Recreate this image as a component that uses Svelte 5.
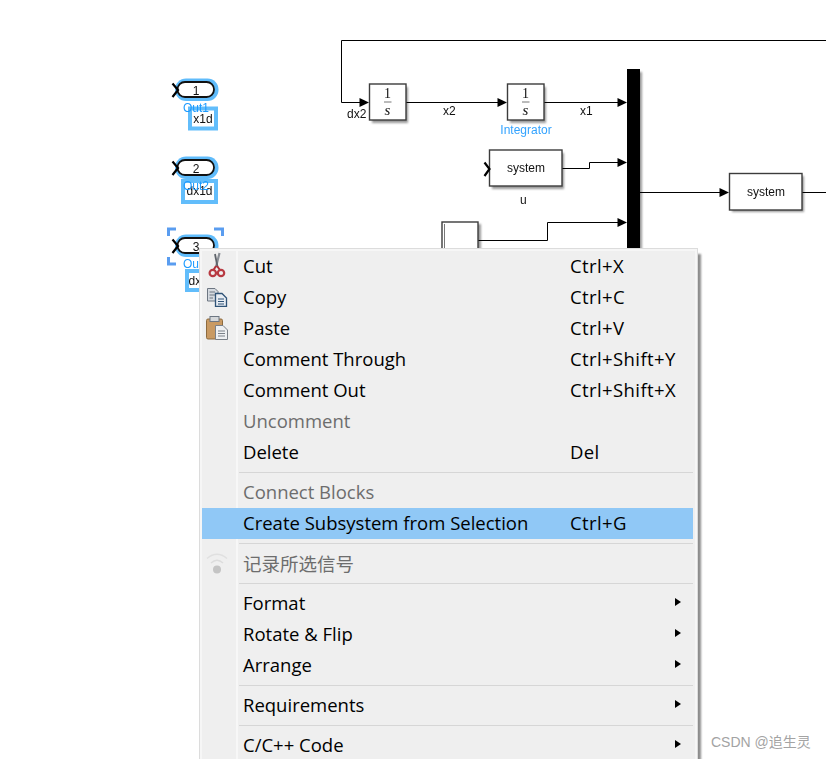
<script lang="ts">
  type Entry = { sep?: boolean; label?: string; key?: string; off?: boolean; hot?: boolean; sub?: boolean; icon?: string; cjk?: boolean };

  const menu: Entry[] = [
    { label: "Cut", key: "Ctrl+X", icon: "cut" },
    { label: "Copy", key: "Ctrl+C", icon: "copy" },
    { label: "Paste", key: "Ctrl+V", icon: "paste" },
    { label: "Comment Through", key: "Ctrl+Shift+Y" },
    { label: "Comment Out", key: "Ctrl+Shift+X" },
    { label: "Uncomment", off: true },
    { label: "Delete", key: "Del" },
    { sep: true },
    { label: "Connect Blocks", off: true },
    { label: "Create Subsystem from Selection", key: "Ctrl+G", hot: true },
    { sep: true },
    { label: "记录所选信号", off: true, icon: "signal", cjk: true },
    { sep: true },
    { label: "Format", sub: true },
    { label: "Rotate & Flip", sub: true },
    { label: "Arrange", sub: true },
    { sep: true },
    { label: "Requirements", sub: true },
    { sep: true },
    { label: "C/C++ Code", sub: true },
  ];

  const ports = [
    { n: "1", y: 82, out: "Out1", box: { x: 190, y: 108.5, w: 26, h: 20 }, text: "x1d" },
    { n: "2", y: 160, out: "Out2", box: { x: 183, y: 181, w: 33, h: 21 }, text: "dx1d" },
    { n: "3", y: 238, out: "Out3", box: { x: 187, y: 271, w: 29, h: 19 }, text: "dx2d" },
  ];

  const arrows = [
    [369, 102],
    [507, 102],
    [627, 102],
    [627, 162],
    [627, 222],
    [729, 192],
  ];
</script>

<div class="page">
  <svg class="diagram" width="826" height="759" viewBox="0 0 826 759">
    <defs>
      <filter id="soft" x="-20%" y="-20%" width="150%" height="150%">
        <feGaussianBlur stdDeviation="1.2" />
      </filter>
    </defs>

    <g class="wire">
      <path d="M826 40.5H341.5V102.5H362" />
      <path d="M406 102.5H500" />
      <path d="M544 102.5H619" />
      <path d="M562 168.5H589.5V162.5H619" />
      <path d="M478 240.5H547.5V222.5H619" />
      <path d="M640 192.5H721" />
      <path d="M802 192.5H826" />
    </g>
    {#each arrows as [x, y]}
      <path class="arrow" d="M{x} {y + 0.5}l-9.5 -4.5v9z" />
    {/each}

    <!-- block shadows -->
    <g class="shadow" filter="url(#soft)">
      <rect x="372" y="87" width="36" height="36" />
      <rect x="510" y="87" width="36" height="36" />
      <rect x="492" y="153" width="72" height="36" />
      <rect x="732" y="176" width="72" height="36" />
      <rect x="445" y="224" width="36" height="36" />
      <rect x="630" y="72" width="12" height="180" />
    </g>

    <rect class="block" x="369.5" y="84" width="36.5" height="36" />
    <rect class="block" x="507.5" y="84" width="36.5" height="36" />
    <rect class="block" x="489.5" y="150" width="72.5" height="36" />
    <rect class="block" x="729.5" y="173.5" width="72.5" height="36.5" />
    <rect class="block" x="442" y="222" width="36" height="36" />
    <path class="inner" d="M444.5 224V250" />
    <rect class="bar" x="627" y="69" width="13" height="190" />

    {#each [387.5, 525.5] as cx}
      <text class="math one" x={cx} y="97.5" text-anchor="middle">1</text>
      <path class="frac" d="M{cx - 3.5} 102H{cx + 4}" />
      <text class="math" x={cx} y="114.5" text-anchor="middle">s</text>
    {/each}

    <text class="lbl" x="347" y="118">dx2</text>
    <text class="lbl" x="443" y="115">x2</text>
    <text class="lbl" x="580" y="115">x1</text>
    <text class="lbl" x="520" y="204">u</text>
    <text class="lbl blue" x="526" y="134" text-anchor="middle">Integrator</text>
    <text class="lbl" x="526" y="172" text-anchor="middle">system</text>
    <text class="lbl" x="766" y="196" text-anchor="middle">system</text>
    <path class="chev" d="M484.5 162.5L489.5 169L484.5 176" />

    {#each ports as p}
      <rect class="halo" x="175" y={p.y - 3.5} width="43.5" height="22.5" rx="11" />
      <rect class="pill" x="177.5" y={p.y} width="36.5" height="15" rx="7.5" />
      <path class="chev" d="M172.5 {p.y + 1.5}L178 {p.y + 8}L172.5 {p.y + 15}" />
      <text class="lbl" x="196" y={p.y + 13} text-anchor="middle">{p.n}</text>
      <rect class="hilite" x={p.box.x} y={p.box.y} width={p.box.w} height={p.box.h} />
      <text class="lbl" x={p.box.x + p.box.w / 2} y={p.box.y + 14} text-anchor="middle">{p.text}</text>
      <text class="lbl out" x="196" y={p.y + 30} text-anchor="middle">{p.out}</text>
    {/each}

    <path class="corner" d="M168.500 236V229H176M214 229H222.500V236M168.500 257V264H176" />
  </svg>

  <div class="menu">
    <div class="body">
      {#each menu as item}
        {#if item.sep}
          <div class="sep-row"><i></i></div>
        {:else}
          <div class="item" class:off={item.off} class:hot={item.hot} class:cjk={item.cjk}>
            <span class="gutter">
              {#if item.icon === "cut"}
                <svg class="lift" width="20" height="26" viewBox="0 0 20 26">
                  <path d="M12.500 1L9 15" stroke="#8a8f96" stroke-width="2.200" fill="none" />
                  <path d="M8 2L10.500 15" stroke="#5f646b" stroke-width="1.800" fill="none" />
                  <path d="M9 14L6.500 18M10 14L13 18" stroke="#b0323a" stroke-width="2" fill="none" />
                  <circle cx="5.800" cy="21" r="3.200" stroke="#b83a42" stroke-width="2.200" fill="none" />
                  <circle cx="14" cy="21" r="3.200" stroke="#b83a42" stroke-width="2.200" fill="none" />
                </svg>
              {:else if item.icon === "copy"}
                <svg width="22" height="20" viewBox="0 0 22 20">
                  <path d="M1.500 1.500H9L12 4.500V14H1.500Z" fill="#d5dae0" stroke="#6d7682" />
                  <path d="M3.500 5H9M3.500 8H9M3.500 11H7" stroke="#6d7682" />
                  <path d="M9.500 6.500H16L20.500 11V19.500H9.500Z" fill="#e8edf3" stroke="#2f5377" stroke-width="1.300" />
                  <path d="M12 12H18M12 14.500H18M12 17H18" stroke="#2f5377" />
                </svg>
              {:else if item.icon === "paste"}
                <svg width="24" height="25" viewBox="0 0 24 25">
                  <rect x="1.500" y="4" width="16" height="20" rx="1.500" fill="#c99a63" stroke="#8d6a3e" />
                  <rect x="5" y="1.500" width="9" height="5" fill="#d6d8da" stroke="#6d7682" />
                  <path d="M10.500 10.500H18L22.500 15V24.500H10.500Z" fill="#eef0f2" stroke="#7a8088" />
                  <path d="M13 16H20M13 18.500H20M13 21H20" stroke="#7a8088" />
                </svg>
              {:else if item.icon === "signal"}
                <svg width="24" height="24" viewBox="0 0 24 24">
                  <path d="M2 7.500Q12 -1 22 7.500" stroke="#e0e0e0" stroke-width="1.500" fill="none" />
                  <path d="M6 12Q12 6.500 18 12" stroke="#dcdcdc" stroke-width="1.500" fill="none" />
                  <circle cx="12" cy="18.500" r="4" fill="#c4c4c4" />
                </svg>
              {/if}
            </span>
            <span class="label">{item.label}</span>
            {#if item.key}<span class="key">{item.key}</span>{/if}
            {#if item.sub}<span class="tri"></span>{/if}
          </div>
        {/if}
      {/each}
    </div>
  </div>

  <div class="mark">CSDN @追生灵</div>
</div>

<style>
  :global(body) {
    margin: 0;
    background: #fff;
    overflow: hidden;
  }
  .page {
    position: relative;
    width: 826px;
    height: 759px;
    overflow: hidden;
    background: #fff;
  }
  .diagram {
    position: absolute;
    left: 0;
    top: 0;
  }
  .wire path {
    fill: none;
    stroke: #000;
    stroke-width: 1;
  }
  .arrow {
    fill: #000;
  }
  .shadow rect {
    fill: #000;
    opacity: 0.4;
  }
  .block {
    fill: #fff;
    stroke: #3c3c3c;
    stroke-width: 1.4;
  }
  .inner {
    stroke: #777;
    fill: none;
  }
  .bar {
    fill: #000;
  }
  .frac {
    stroke: #777;
    fill: none;
  }
  .math {
    font-family: "Liberation Serif", serif;
    font-size: 14px;
    fill: #111;
  }
  .math:not(.one) {
    font-style: italic;
    font-size: 15px;
  }
  .lbl {
    font-family: "Liberation Sans", sans-serif;
    font-size: 12px;
    fill: #111;
  }
  .lbl.blue {
    fill: #33a3ff;
  }
  .lbl.out {
    fill: #1e9bff;
  }
  .chev {
    fill: none;
    stroke: #000;
    stroke-width: 2.2;
  }
  .halo {
    fill: #60bcfb;
  }
  .pill {
    fill: #fff;
    stroke: #111;
    stroke-width: 1.8;
  }
  .hilite {
    fill: #fff;
    stroke: #62bdfb;
    stroke-width: 4;
  }
  .corner {
    fill: none;
    stroke: #5a9df0;
    stroke-width: 3;
  }

  .menu {
    position: absolute;
    left: 199px;
    top: 248px;
    width: 499px;
    box-sizing: border-box;
    padding: 2px 2px 0 2px;
    background: #f6f6f6;
    border: 1px solid #dcdcdc;
    box-shadow: 4px 5px 2px -1px rgba(0, 0, 0, 0.45);
    font-family: "Open Sans", "Noto Sans CJK SC", sans-serif;
    font-size: 18.5px;
    color: #000;
  }
  .body {
    position: relative;
    background: #efefef;
  }
  /* lighter strip between the icon column and the labels */
  .body::before {
    content: "";
    position: absolute;
    left: 34px;
    top: 0;
    bottom: 0;
    width: 2px;
    background: #f7f7f7;
  }
  .item {
    display: flex;
    align-items: center;
    height: 31px;
    box-sizing: border-box;
    padding-bottom: 2px;
    margin-right: 2px;
    position: relative;
  }
  .item.cjk {
    padding-bottom: 2px;
  }
  .item.off {
    color: #6d6d6d;
  }
  .item.hot {
    background: #90c8f6;
  }
  .gutter {
    flex: 0 0 41px;
    display: flex;
    justify-content: center;
    align-items: center;
    padding-right: 11px;
    box-sizing: border-box;
    height: 100%;
  }
  .lift {
    margin-top: -2px;
  }
  .label {
    white-space: nowrap;
  }
  .key {
    position: absolute;
    left: 368px;
    white-space: nowrap;
    letter-spacing: 0.4px;
  }
  .tri {
    position: absolute;
    left: 473px;
    margin-top: -1px;
    width: 0;
    height: 0;
    border-left: 6px solid #000;
    border-top: 4.5px solid transparent;
    border-bottom: 4.5px solid transparent;
  }
  .sep-row {
    height: 9px;
    padding: 0 2px 0 37px;
    display: flex;
    align-items: center;
    position: relative;
  }
  .sep-row i {
    display: block;
    flex: 1;
    height: 1px;
    background: #d6d6d6;
  }
  .mark {
    position: absolute;
    left: 711px;
    top: 731px;
    font-family: "Liberation Sans", "Noto Sans CJK SC", sans-serif;
    font-size: 14px;
    color: #a3a3a3;
    white-space: nowrap;
  }
</style>
